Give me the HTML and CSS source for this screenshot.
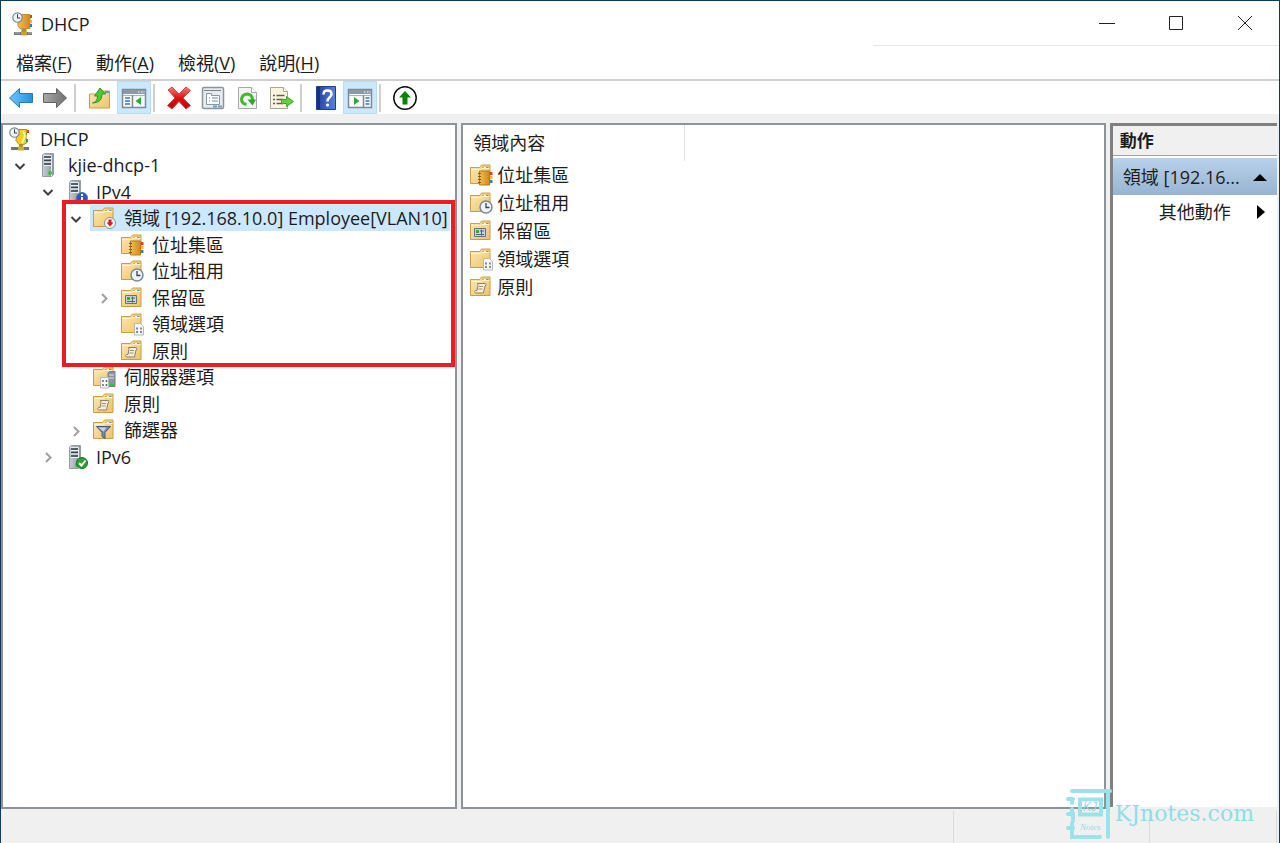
FILE: index.html
```html
<!DOCTYPE html>
<html lang="zh-Hant">
<head>
<meta charset="utf-8">
<title>DHCP</title>
<link rel="stylesheet" href="styles.css">
</head>
<body>
<svg class="defs" aria-hidden="true">
  <defs>
    <linearGradient id="gFolder" x1="0" y1="0" x2="1" y2="1"><stop offset="0" stop-color="#fbe9b4"/><stop offset="1" stop-color="#ecc468"/></linearGradient>
    <linearGradient id="gServer" x1="0" x2="1"><stop offset="0" stop-color="#c6cdd3"/><stop offset="1" stop-color="#8b969e"/></linearGradient>
    <linearGradient id="gGold" x1="0" x2="1"><stop offset="0" stop-color="#f2bd50"/><stop offset="1" stop-color="#cf8a1c"/></linearGradient>
    <linearGradient id="gBlue" x1="0" x2="1"><stop offset="0" stop-color="#6cc4fb"/><stop offset="1" stop-color="#2492de"/></linearGradient>
    <linearGradient id="gGray" x1="0" x2="1"><stop offset="0" stop-color="#a8a8a8"/><stop offset="1" stop-color="#707070"/></linearGradient>
    <linearGradient id="gRed" x1="0" y1="0" x2="0" y2="1"><stop offset="0" stop-color="#f08078"/><stop offset=".5" stop-color="#e01010"/><stop offset="1" stop-color="#b80808"/></linearGradient>
    <linearGradient id="gHelp" x1="0" x2="1"><stop offset="0" stop-color="#1d3f9c"/><stop offset="1" stop-color="#5b83d8"/></linearGradient>

    <symbol id="folder" viewBox="0 0 24 24">
      <path d="M1.500 4.500h9l2-2.500h8.500v18.500h-19.500z" fill="url(#gFolder)" stroke="#c99c45"/>
      <path d="M12 5.500l1.500-2h7v2z" fill="#e6b44c"/><path d="M15 4.500h4" stroke="#fff"/><path d="M17 4.500h2" stroke="#4d9fdb"/>
      <path d="M2 6.500h9.500l1.500-1h7.500" fill="none" stroke="#fff3cc"/>
    </symbol>
    <symbol id="clock" viewBox="0 0 14 14">
      <circle cx="7" cy="7" r="6" fill="#eef4fa" stroke="#7d8894" stroke-width="1.500"/><path d="M7 3v4.500h3.500" fill="none" stroke="#35445a" stroke-width="1.300"/>
    </symbol>
    <symbol id="book" viewBox="0 0 16 16">
      <path d="M2.500 1h10v14h-10z" fill="url(#gGold)" stroke="#b57a1d"/><path d="M1 3.500h3m-3 3h3m-3 3h3m-3 3h3" stroke="#7b5b2b"/>
      <path d="M13 2h2.500v3h-2.500z" fill="#e23b28"/><path d="M13 6h2.500v3h-2.500z" fill="#efb532"/><path d="M13 10h2.500v3h-2.500z" fill="#287fce"/>
    </symbol>
    <symbol id="server" viewBox="0 0 24 24">
      <path d="M6.500 2l2-1.500h9v21l-2 2h-9z" fill="url(#gServer)" stroke="#939ca4"/><path d="M7 2.500h8.500v20.500" fill="none" stroke="#e5e9ed"/>
      <path d="M8 4h7m-7 3.500h7m-7 3.500h7" stroke="#37424d" stroke-width="1.300"/><path d="M8 5.500h7m-7 3.500h7m-7 3.500h7" stroke="#eef2f5"/><circle cx="14" cy="20" r="2" fill="#32c832"/>
    </symbol>
    <symbol id="i-pool" viewBox="0 0 24 24"><use href="#folder"/><use href="#book" x="8" y="7" width="16" height="16"/></symbol>
    <symbol id="i-lease" viewBox="0 0 24 24"><use href="#folder"/><use href="#clock" x="10" y="9" width="14" height="14"/></symbol>
    <symbol id="i-reserve" viewBox="0 0 24 24"><use href="#folder"/><path d="M5.500 9.500h11v8h-11z" fill="#c9d2d8" stroke="#66737b"/><path d="M7 11h3v3h-3z" fill="#23b33a"/><path d="M11 12h4m-8 3.500h8m-2.500-5v6" stroke="#526675"/></symbol>
    <symbol id="i-option" viewBox="0 0 24 24"><use href="#folder"/><path d="M14.500 11.500h6l3 3v8.500h-9z" fill="#f5f6f8" stroke="#b3b8bd"/><path d="M17 15.500v2m4-2v2m-4 1.500v2m4-2v2" stroke="#5e6878" stroke-width="1.500"/></symbol>
    <symbol id="i-policy" viewBox="0 0 24 24"><use href="#folder"/><path d="M8.500 8.500h8q1.500 1.500-.5 2.500l-1.500 7h-8q-2-1.500 0-2.500h1.500l1-5z" fill="#f5edda" stroke="#8d8068"/><path d="M10 11.500h4m-4.500 2.500h4" fill="none" stroke="#9b9280"/></symbol>
    <symbol id="i-srvopt" viewBox="0 0 24 24"><use href="#folder"/><path d="M16 8l1.500-1.500h5.500v15h-7z" fill="#8a969f" stroke="#737f88"/><path d="M17 10h5m-5 3h5" stroke="#dce3e8"/><path d="M18 20h4" stroke="#2fc52f" stroke-width="2"/><path d="M8.500 12.500h8v10.500h-8z" fill="#f5f6f8" stroke="#b3b8bd"/><path d="M11 15v2m3.500-2v2m-3.500 2v2m3.500-2v2" stroke="#5e6878" stroke-width="1.500"/></symbol>
    <symbol id="i-filter" viewBox="0 0 24 24"><use href="#folder"/><path d="M4.500 8.500h14l-5.500 6v6l-3-2v-4z" fill="#748da7" stroke="#465e79"/><path d="M6.500 9.500h8l-3 4z" fill="#c6d8e7"/></symbol>
    <symbol id="i-scope" viewBox="0 0 24 24"><use href="#folder"/><circle cx="18" cy="17" r="5.500" fill="#f8f8f8" stroke="#8e8e8e"/><path d="M16.500 13.500h3v3h2l-3.500 4-3.500-4h2z" fill="#d71919"/></symbol>
    <symbol id="i-v4" viewBox="0 0 24 24"><use href="#server" x="-1"/><circle cx="18" cy="18" r="5.500" fill="#2858c8" stroke="#4a72cf"/><path d="M18 14v2m0 1v5" stroke="#fff" stroke-width="2"/></symbol>
    <symbol id="i-v6" viewBox="0 0 24 24"><use href="#server" x="-1"/><circle cx="18" cy="18" r="5.500" fill="#2f9e39" stroke="#167222"/><path d="M15 18l2.500 2.500 4-5" fill="none" stroke="#fff" stroke-width="2"/></symbol>
    <symbol id="i-dhcp" viewBox="0 0 24 24"><path d="M10.500 16h5v4h-5z" fill="#a38a57"/><path d="M3 21.500h18" stroke="#6d7579" stroke-width="3"/><path d="M4 21h5m8 0h4" stroke="#b8c0c4"/><path d="M10 19.500h6v4h-6z" fill="#cfa027"/><path d="M7 2.500h12v14h-10l-2-3z" fill="url(#gGold)" stroke="#c58b2c"/><path d="M19 3h2v3h-2z" fill="#e23b28"/><path d="M19 8h2v3h-2z" fill="#efb532"/><path d="M19 12h2v3h-2z" fill="#287fce"/><use href="#clock" x="1" y="0" width="11" height="11"/></symbol>
    <symbol id="i-dhcp-root" viewBox="0 0 24 24"><path d="M11 16h4v5h-4z" fill="#a38a57"/><path d="M3 21.500h18" stroke="#6d7579" stroke-width="3"/><path d="M10 19.500h6v4h-6z" fill="#cfb027"/><path d="M9 2.500h10l-1 8 1 5-3 2h-5l-3-4z" fill="#f3ce22" stroke="#b58b19"/><path d="M15 4l2 5-3 7" fill="none" stroke="#fff391" stroke-width="2"/><path d="M19 3h2v3h-2z" fill="#e23b28"/><path d="M18 12h2v3h-2z" fill="#287fce"/><use href="#clock" x="1" y="0" width="11" height="11"/></symbol>
    <symbol id="i-open" viewBox="0 0 16 16"><path d="M3.500 6l4.500 4.500 4.500-4.500" fill="none" stroke="#404040" stroke-width="2"/></symbol>
    <symbol id="i-closed" viewBox="0 0 16 16"><path d="M6 4l4.500 4.500-4.500 4.500" fill="none" stroke="#a0a0a0" stroke-width="2"/></symbol>
    <symbol id="i-arrow" viewBox="0 0 26 24"><path d="M1.500 12l10-9.500v5h13v9h-13v5z"/></symbol>
    <symbol id="i-window" viewBox="0 0 26 24"><path d="M1.500 3.500h23v18h-23z" fill="#f7f9fb" stroke="#7e8b97" stroke-width="1.500"/><path d="M2 4h22v4h-22z" fill="#8b99a6"/><path d="M17 6h1.500m1.500 0h1.500m1 0h1" stroke="#fff"/><path d="M2 9.500h22" stroke="#a7b2bc"/></symbol>
  </defs>
</svg>

<div class="window">
  <header class="titlebar">
    <svg class="icon"><use href="#i-dhcp"/></svg>
    <h1 class="title">DHCP</h1>
    <div class="caption-buttons">
      <button class="caption" aria-label="最小化"><svg viewBox="0 0 16 16"><path d="M0 8.500h16"/></svg></button>
      <button class="caption" aria-label="最大化"><svg viewBox="0 0 16 16"><path d="M1.500 1.500h13v13h-13z"/></svg></button>
      <button class="caption" aria-label="關閉"><svg viewBox="0 0 16 16"><path d="M1 1l14 14M15 1l-14 14"/></svg></button>
    </div>
  </header>

  <nav class="menubar">
    <button class="menu">檔案(<u>F</u>)</button>
    <button class="menu">動作(<u>A</u>)</button>
    <button class="menu">檢視(<u>V</u>)</button>
    <button class="menu">說明(<u>H</u>)</button>
  </nav>

  <div class="toolbar" role="toolbar">
    <button class="tool" aria-label="上一頁"><svg class="tool-icon" fill="url(#gBlue)" stroke="#2879b5"><use href="#i-arrow"/></svg></button>
    <button class="tool" aria-label="下一頁"><svg class="tool-icon" viewBox="0 0 26 24"><path d="M24.500 12l-10-9.500v5h-13v9h13v5z" fill="url(#gGray)" stroke="#606060"/></svg></button>
    <span class="divider"></span>
    <button class="tool" aria-label="上一層"><svg class="tool-icon" viewBox="0 0 26 24"><path d="M2.500 8h9l2-3h9v17h-20z" fill="url(#gFolder)" stroke="#c99c45"/><path d="M18 6h4" stroke="#4d9fdb" stroke-width="2"/><path d="M5.500 17q5-1 5-7h-3l5.500-8 5.500 6h-3.500q0 9-9.500 9z" fill="#4bc832" stroke="#2c9c20"/></svg></button>
    <button class="tool pressed" aria-label="顯示主控台樹狀目錄"><svg class="tool-icon" viewBox="0 0 26 24"><use href="#i-window"/><path d="M11.500 9v12" stroke="#7e8b97" stroke-width="1.500"/><path d="M4 12h5m-5 3h5m-5 3h5" stroke="#3b78b8" stroke-width="1.500"/><path d="M20 11v8l-5.500-4z" fill="#32a932"/></svg></button>
    <span class="divider"></span>
    <button class="tool" aria-label="刪除"><svg class="tool-icon" viewBox="0 0 26 24"><path d="M2 4l4-3 7 7 7-7 4.500 3.500-7.500 7.500 7.500 7.500-4.500 3.500-7-7.500-7 7.500-4.500-3.500 7.500-7.500z" fill="url(#gRed)" stroke="#c94a44"/></svg></button>
    <button class="tool" aria-label="內容"><svg class="tool-icon" viewBox="0 0 26 24"><rect x="2.500" y="1.500" width="21" height="21" rx="1.500" fill="#e8ecef" stroke="#8b949c" stroke-width="1.500"/><path d="M4 4.500h17" stroke="#77828b"/><path d="M6.500 9.500v-2h5v2h8v9h-13z" fill="#fff" stroke="#8996a1"/><path d="M9 12h1m2 0h6m-9 3h1m2 0h6" stroke="#7188a0"/><path d="M13 20.500h4" stroke="#43a9e7" stroke-width="2"/><path d="M18 20.500h4" stroke="#8b949c" stroke-width="2"/></svg></button>
    <button class="tool" aria-label="重新整理"><svg class="tool-icon" viewBox="0 0 26 24"><path d="M4.500 1.500h13l5 5v16h-18z" fill="#f2f4f5" stroke="#a2a8ac"/><path d="M17.500 1.500v5h5" fill="#fff" stroke="#a2a8ac"/><path d="M12.500 18.500q-5-1-5-5.500 1-5 6-5 5 .5 5 6" fill="none" stroke="#43b92d" stroke-width="3"/><path d="M13.500 13.500h8.500l-3.500 6z" fill="#32a723"/></svg></button>
    <button class="tool" aria-label="匯出清單"><svg class="tool-icon" viewBox="0 0 26 24"><path d="M2.500 1.500h13l4 4v17h-17z" fill="#faf5df" stroke="#aaa58f"/><path d="M15.500 1.500v4h4" fill="#fff" stroke="#aaa58f"/><path d="M5 9.500h2m1.500 0h8m-11.500 4h2m1.500 0h7m-10.500 4h2m1.500 0h7" stroke="#655f4d" stroke-width="1.500"/><path d="M13.500 13.500h5v-3l7 5-7 5v-3h-5z" fill="#65d03f" stroke="#42a328"/></svg></button>
    <span class="divider"></span>
    <button class="tool" aria-label="說明"><svg class="tool-icon" viewBox="0 0 26 24"><path d="M3.500 .5h19v23h-19z" fill="url(#gHelp)" stroke="#203f8a"/><path d="M5.500 1v22" stroke="#173379" stroke-width="3"/><path d="M10.500 8.500q0-4 4-4t4 3.500q0 2-2 3.500t-2 4" fill="none" stroke="#fff" stroke-width="2.500"/><circle cx="14.500" cy="19" r="1.600" fill="#fff"/></svg></button>
    <button class="tool pressed" aria-label="顯示動作窗格"><svg class="tool-icon" viewBox="0 0 26 24"><use href="#i-window"/><path d="M16.500 9v12" stroke="#7e8b97" stroke-width="1.500"/><path d="M18.500 12h4m-4 3h4m-4 3h4" stroke="#3b78b8" stroke-width="1.500"/><path d="M7 11v8l5.500-4z" fill="#32a932"/></svg></button>
    <span class="divider"></span>
    <button class="tool" aria-label="向上"><svg class="tool-icon" viewBox="0 0 26 24"><circle cx="13" cy="12" r="11.200" fill="#fff" stroke="#111" stroke-width="1.500"/><path d="M13 5l6 6.500h-3.500v7h-5v-7h-3.500z" fill="#078307"/></svg></button>
  </div>

  <main class="panes">
    <section class="pane tree-pane">
      <ul class="tree">
        <li class="row root"><span class="node"><svg class="icon"><use href="#i-dhcp-root"/></svg>DHCP</span></li>
        <li class="row l1"><svg class="chevron"><use href="#i-open"/></svg><span class="node"><svg class="icon"><use href="#server"/></svg>kjie-dhcp-1</span></li>
        <li class="row l2"><svg class="chevron"><use href="#i-open"/></svg><span class="node"><svg class="icon"><use href="#i-v4"/></svg>IPv4</span></li>
        <li class="row l3"><svg class="chevron"><use href="#i-open"/></svg><span class="node selected"><svg class="icon"><use href="#i-scope"/></svg>領域 [192.168.10.0] Employee[VLAN10]</span></li>
        <li class="row l4"><span class="chevron"></span><span class="node"><svg class="icon"><use href="#i-pool"/></svg>位址集區</span></li>
        <li class="row l4"><span class="chevron"></span><span class="node"><svg class="icon"><use href="#i-lease"/></svg>位址租用</span></li>
        <li class="row l4"><svg class="chevron"><use href="#i-closed"/></svg><span class="node"><svg class="icon"><use href="#i-reserve"/></svg>保留區</span></li>
        <li class="row l4"><span class="chevron"></span><span class="node"><svg class="icon"><use href="#i-option"/></svg>領域選項</span></li>
        <li class="row l4"><span class="chevron"></span><span class="node"><svg class="icon"><use href="#i-policy"/></svg>原則</span></li>
        <li class="row l3"><span class="chevron"></span><span class="node"><svg class="icon"><use href="#i-srvopt"/></svg>伺服器選項</span></li>
        <li class="row l3"><span class="chevron"></span><span class="node"><svg class="icon"><use href="#i-policy"/></svg>原則</span></li>
        <li class="row l3"><svg class="chevron"><use href="#i-closed"/></svg><span class="node"><svg class="icon"><use href="#i-filter"/></svg>篩選器</span></li>
        <li class="row l2"><svg class="chevron"><use href="#i-closed"/></svg><span class="node"><svg class="icon"><use href="#i-v6"/></svg>IPv6</span></li>
      </ul>
      <div class="highlight"></div>
    </section>

    <section class="pane">
      <table class="list">
        <thead><tr><th scope="col">領域內容</th></tr></thead>
        <tbody>
          <tr><td><span class="item"><svg class="icon"><use href="#i-pool"/></svg>位址集區</span></td></tr>
          <tr><td><span class="item"><svg class="icon"><use href="#i-lease"/></svg>位址租用</span></td></tr>
          <tr><td><span class="item"><svg class="icon"><use href="#i-reserve"/></svg>保留區</span></td></tr>
          <tr><td><span class="item"><svg class="icon"><use href="#i-option"/></svg>領域選項</span></td></tr>
          <tr><td><span class="item"><svg class="icon"><use href="#i-policy"/></svg>原則</span></td></tr>
        </tbody>
      </table>
    </section>

    <aside class="actions">
      <h2 class="actions-title">動作</h2>
      <button class="action-group">領域 [192.16...<svg class="marker" viewBox="0 0 16 16"><path d="M1 12l7-7 7 7z"/></svg></button>
      <button class="action">其他動作<svg class="marker" viewBox="0 0 16 16"><path d="M5 1l8 7-8 7z"/></svg></button>
    </aside>
  </main>

  <footer class="status"><span class="cell wide"></span><span class="cell"></span><span class="cell last"></span></footer>

  <div class="watermark">
    <svg class="notebook" viewBox="0 0 46 50">
      <path d="M6 2h38M42 2v46M6 34v14h28M6 20v6M6 10v4M2 10h5M2 25h5v7M2 39h5" fill="none" stroke="#9be2eb" stroke-width="4" stroke-linecap="round"/>
      <path d="M14 10.500h21v15h-21z" fill="none" stroke="#9be2eb" stroke-width="4"/>
      <text x="17" y="22" class="mark-kj">KJ</text>
      <text x="14" y="41" class="mark-notes">Notes</text>
    </svg>
    <span>KJnotes.com</span>
  </div>
</div>
</body>
</html>
```
FILE: styles.css
```css
* { box-sizing: border-box; }

body {
  margin: 0;
  font: 18px/24px "Open Sans", "Noto Sans CJK TC", sans-serif;
  color: #1c1c1c;
  background: #fff;
}

button {
  margin: 0;
  padding: 0;
  border: 0;
  background: none;
  font: inherit;
  color: inherit;
}

.defs { position: absolute; width: 0; height: 0; }

.window {
  position: relative;
  display: flex;
  flex-direction: column;
  min-height: 100vh;
  border: 1px solid #0b3a5e;
  border-bottom: 0;
}

.icon { flex: none; width: 24px; height: 24px; }

/* Title bar */
.titlebar {
  display: flex;
  align-items: center;
  gap: 6px;
  height: 45px;
  padding-left: 10px;
}
.title { margin: 0; font-size: 18px; font-weight: 400; }
.caption-buttons {
  display: flex;
  align-self: stretch;
  margin-left: auto;
  width: 32%;
  justify-content: flex-end;
  border-bottom: 1px solid #e6e6e6;
}
.caption { width: 69px; display: grid; place-items: center; }
.caption svg { width: 16px; height: 16px; fill: none; stroke: #222; }

/* Menu bar */
.menubar {
  display: flex;
  gap: 24px;
  height: 33px;
  padding: 0 15px;
  align-items: center;
}
.menu u { text-underline-offset: 2px; }

/* Toolbar */
.toolbar {
  display: flex;
  align-items: center;
  height: 35px;
  padding: 0 3px;
  border-top: 2px solid #cfcfcf;
}
.tool { width: 34px; height: 33px; display: grid; place-items: center; }
.tool-icon { width: 26px; height: 24px; }
.pressed { background: #cce8ff; border: 1px solid #b5dcfb; }
.divider { width: 2px; height: 28px; margin: 0 7px 0 2px; background: #cfcfcf; }

/* Panes */
.panes {
  flex: 1;
  display: grid;
  grid-template-columns: 456fr 644fr 167fr;
  gap: 4px;
  padding: 9px 2px 0 0;
  background: #f0f0f0;
}
.pane { position: relative; min-width: 0; border: 2px solid #8e939b; background: #fff; }

.tree { margin: 0; padding: 0; list-style: none; }
.row { display: flex; height: 27px; }
.row:nth-child(even) { height: 26px; }
.root { padding-left: 3px; }
.l1 { padding-left: 9px; }
.l2 { padding-left: 37px; }
.l3 { padding-left: 65px; }
.l4 { padding-left: 93px; }
.chevron { flex: none; width: 16px; height: 16px; margin: 6px 6px 0 0; }
.node {
  flex: 1;
  display: flex;
  align-items: center;
  gap: 8px;
  margin-right: 5px;
  padding-left: 2px;
  white-space: nowrap;
}
.selected { background: #cce8ff; }
.highlight {
  position: absolute;
  top: 75px;
  left: 59px;
  right: 0;
  height: 167px;
  border: 4px solid #ed1c24;
}

.list { width: 222px; border-collapse: collapse; }
.list th {
  height: 36px;
  padding: 0 10px;
  border-right: 1px solid #e2e2e2;
  text-align: left;
  font-weight: 400;
}
.list td { height: 28px; padding: 0 6px; }
.item { display: flex; align-items: center; gap: 4px; }

.actions {
  min-width: 0;
  border: solid #808080;
  border-width: 3px 0 0 3px;
  background: #fff;
  margin-bottom: 2px;
}
.actions-title {
  margin: 0 0 2px;
  padding: 3px 7px;
  height: 30px;
  border-bottom: 1px solid #a0a0a0;
  background: #f0f0f0;
  font-size: 17px;
  font-weight: 700;
}
.action-group, .action {
  display: flex;
  align-items: center;
  justify-content: space-between;
  width: 100%;
  text-align: left;
  white-space: nowrap;
}
.action-group {
  height: 37px;
  padding: 0 9px 0 10px;
  background: linear-gradient(#b9d1ea, #98b4d2);
}
.action { height: 34px; padding: 0 9px 0 46px; }
.marker { flex: none; width: 16px; height: 16px; }

/* Status bar */
.status { display: flex; height: 34px; padding: 2px 2px 0 0; background: #f0f0f0; }
.cell { flex: 196; border-right: 1px solid #dadada; }
.wide { flex: 953; }
.last { flex: 126; }

.watermark {
  position: absolute;
  right: 25px;
  bottom: 4px;
  display: flex;
  align-items: center;
  gap: 3px;
  color: #8fdde8;
  font: 22px/24px "DejaVu Serif", serif;
}
.notebook { width: 46px; height: 50px; }
.mark-kj { font: italic 12px "Liberation Sans", sans-serif; fill: #8fdde8; }
.mark-notes { font: italic 9px "Liberation Serif", serif; fill: #8fdde8; }
```
